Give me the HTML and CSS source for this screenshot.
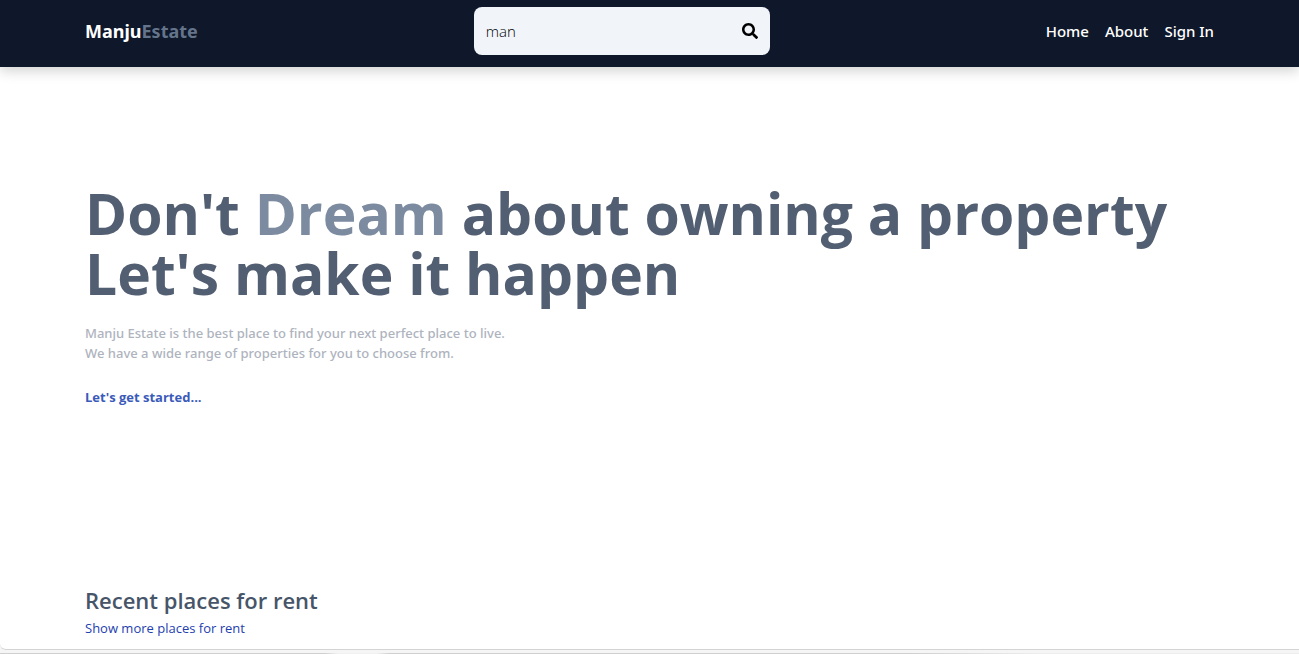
FILE: index.html
```html
<!DOCTYPE html>
<html lang="en">
<head>
<meta charset="utf-8">
<meta name="viewport" content="width=device-width, initial-scale=1">
<title>Manju Estate</title>
<link rel="stylesheet" href="styles.css">
</head>
<body>
<header class="header">
  <div class="container header-inner">
    <a class="logo" href="#"><span class="logo-first">Manju</span><span class="logo-second">Estate</span></a>
    <form class="search">
      <input class="search-input" type="text" value="man" aria-label="Search">
      <button class="search-button" type="button" aria-label="Search">
        <svg class="search-icon" viewBox="0 0 512 512" aria-hidden="true"><path d="M505 442.700L405.300 343c-4.500-4.500-10.600-7-17-7H372c27.600-35.300 44-79.700 44-128C416 93.100 322.900 0 208 0S0 93.100 0 208s93.100 208 208 208c48.300 0 92.700-16.400 128-44v16.300c0 6.400 2.500 12.500 7 17l99.700 99.700c9.400 9.400 24.600 9.400 33.900 0l28.300-28.300c9.400-9.400 9.400-24.600.1-34zM208 336c-70.700 0-128-57.200-128-128 0-70.700 57.200-128 128-128 70.700 0 128 57.200 128 128 0 70.700-57.200 128-128 128z"/></svg>
      </button>
    </form>
    <nav class="nav">
      <a href="#">Home</a>
      <a href="#">About</a>
      <a href="#">Sign In</a>
    </nav>
  </div>
</header>
<main class="page">
  <section class="container hero">
    <h1 class="hero-title">Don't <span class="hero-accent">Dream</span> about owning a property<br>Let's make it happen</h1>
    <p class="hero-text">Manju Estate is the best place to find your next perfect place to live.<br>We have a wide range of properties for you to choose from.</p>
    <a class="hero-link" href="#">Let's get started...</a>
  </section>
  <section class="container listings">
    <h2 class="listings-title">Recent places for rent</h2>
    <a class="listings-link" href="#">Show more places for rent</a>
  </section>
</main>
<footer class="edge"></footer>
</body>
</html>
```
FILE: styles.css
```css
*, *::before, *::after {
  box-sizing: border-box;
}

body {
  margin: 0;
  min-height: 100vh;
  display: flex;
  flex-direction: column;
  background: #f5f5f5;
  font-family: "Open Sans", "Noto Sans", sans-serif;
  font-size: 16px;
  line-height: 24px;
}

h1, h2, p {
  margin: 0;
}

a {
  color: inherit;
  text-decoration: none;
}

.container {
  width: 100%;
  max-width: 1153px;
  margin: 0 auto;
  padding: 0 12px;
}

.header {
  position: relative;
  background: #0f172a;
  box-shadow: 0 4px 12px rgba(0, 0, 0, 0.18);
}

.header-inner {
  display: flex;
  justify-content: space-between;
  align-items: center;
  padding-top: 7px;
  padding-bottom: 12px;
}

.logo {
  font-family: "Noto Sans", "Open Sans", sans-serif;
  font-size: 18px;
  font-weight: 700;
}

.logo-first {
  color: #ffffff;
}

.logo-second {
  color: #64748b;
}

.search {
  display: flex;
  align-items: center;
  padding: 12px;
  border-radius: 8px;
  background: #f1f5f9;
}

.search-input {
  width: 256px;
  height: 24px;
  padding: 0;
  border: 0;
  outline: 0;
  background: transparent;
  color: #000000;
  font: inherit;
  font-size: 15px;
  font-weight: 300;
}

.search-button {
  display: flex;
  padding: 0;
  border: 0;
  background: transparent;
}

.search-icon {
  width: 16px;
  height: 16px;
}

.nav {
  display: flex;
  gap: 16px;
  color: #ffffff;
  font-family: "Noto Sans", "Open Sans", sans-serif;
  font-size: 15px;
  font-weight: 500;
}

.page {
  flex: 1;
  padding-bottom: 8px;
  border-bottom: 1px solid #d4d4d4;
  border-bottom-left-radius: 6px;
  background: #ffffff;
}

.hero {
  display: flex;
  flex-direction: column;
  align-items: flex-start;
  padding-top: 116px;
  padding-bottom: 177px;
}

.hero-title {
  margin-bottom: 20px;
  color: #525e71;
  font-size: 57px;
  font-weight: 700;
  line-height: 60px;
}

.hero-accent {
  color: #7c8b9f;
}

.hero-text {
  margin-bottom: 24px;
  color: #aeb3be;
  font-family: "Noto Sans", "Open Sans", sans-serif;
  font-size: 13px;
  font-weight: 500;
  line-height: 20px;
}

.hero-link {
  color: #3b5bba;
  font-size: 13px;
  font-weight: 700;
  line-height: 20px;
}

.listings-title {
  margin-bottom: 2px;
  color: #475569;
  font-size: 22px;
  font-weight: 600;
  line-height: 32px;
}

.listings-link {
  display: block;
  color: #1e40af;
  font-size: 13px;
  line-height: 20px;
}

.edge {
  height: 4px;
  background: linear-gradient(to right, #cfcfcf 25%, #f1f1f1 26%, #f1f1f1 29%, #cfcfcf 30%, #cfcfcf 70%, #ededed 80%) bottom / 100% 1px no-repeat;
}
```
